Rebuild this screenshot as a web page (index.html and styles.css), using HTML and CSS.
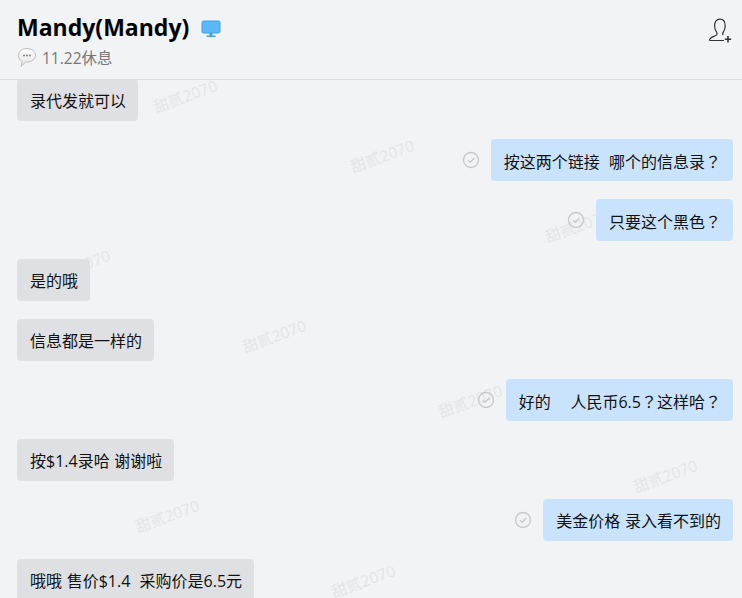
FILE: index.html
```html
<!DOCTYPE html>
<html lang="zh">
<head>
<meta charset="utf-8">
<title>Mandy</title>
<link rel="stylesheet" href="styles.css">
</head>
<body>
<div class="app">
  <header class="head">
    <div class="head-main">
      <div class="title-row">
        <h1 class="name">Mandy(Mandy)</h1>
        <svg class="pc" viewBox="0 0 20 18" width="20" height="18"><rect x="1" y="1" width="18" height="12" rx="1.5" fill="#5cb8f5" stroke="#36a3ee"/><rect x="8.5" y="13" width="3" height="3" fill="#36a3ee"/><rect x="5.5" y="15.5" width="9" height="1.5" fill="#36a3ee"/></svg>
      </div>
      <div class="status">
        <svg class="bubble-ico" viewBox="0 0 20 20" width="20" height="20"><defs><linearGradient id="glow" x1="0" y1="0" x2="0" y2="1"><stop offset="0" stop-color="#ffffff"/><stop offset="1" stop-color="#e4e4e4"/></linearGradient></defs><path d="M10 1.500c4.700 0 8.500 3 8.500 6.800s-3.800 6.700-8.500 6.700l-1.200-.1L4 19.500l1.200-4.800C3.100 13.500 1.500 10.800 1.500 8.300 1.500 4.500 5.300 1.500 10 1.500z" fill="url(#glow)" stroke="#bcbcbc"/><circle cx="7" cy="8.500" r=".9" fill="#777"/><circle cx="10" cy="8.500" r=".9" fill="#777"/><circle cx="13" cy="8.500" r=".9" fill="#777"/></svg>
        <span>11.22休息</span>
      </div>
    </div>
    <svg class="add-user" viewBox="0 0 24 26" width="24" height="26" fill="none" stroke="#333" stroke-width="1.2"><path d="M1.500 23.500c0-3 3-3.600 6.400-5 1.600-.7 1.300-2.600.4-3.800-1.100-1.500-1.700-3.300-1.700-6 0-4 2.100-6.500 5.300-6.500s5.300 2.500 5.300 6.500c0 2.700-.6 4.500-1.700 6-.9 1.200-1.100 2.400-.2 3.300M1.500 23.500H16"/><path d="M20 19v6.500M16.800 22.300h6.400" stroke-width="1.600"/></svg>
  </header>
  <main class="chat">
    <div class="marks" aria-hidden="true">
      <span class="mark m1">甜贰2070</span>
      <span class="mark m2">甜贰2070</span>
      <span class="mark m3">甜贰2070</span>
      <span class="mark m4">甜贰2070</span>
      <span class="mark m5">甜贰2070</span>
      <span class="mark m6">甜贰2070</span>
      <span class="mark m7">甜贰2070</span>
      <span class="mark m8">甜贰2070</span>
      <span class="mark m9">甜贰2070</span>
    </div>
    <div class="list">
      <div class="msg in first"><div class="text">录代发就可以</div></div>
      <div class="msg out"><svg class="tick" viewBox="0 0 18 18"><circle cx="9" cy="9" r="7.500"/><path d="M5.800 9.300l2.300 2 4.200-4.300"/></svg><div class="text">按这两个链接&nbsp; 哪个的信息录<span class="q">？</span></div></div>
      <div class="msg out"><svg class="tick" viewBox="0 0 18 18"><circle cx="9" cy="9" r="7.500"/><path d="M5.800 9.300l2.300 2 4.200-4.300"/></svg><div class="text">只要这个黑色<span class="q">？</span></div></div>
      <div class="msg in"><div class="text">是的哦</div></div>
      <div class="msg in"><div class="text">信息都是一样的</div></div>
      <div class="msg out"><svg class="tick" viewBox="0 0 18 18"><circle cx="9" cy="9" r="7.500"/><path d="M5.800 9.300l2.300 2 4.200-4.300"/></svg><div class="text tight">好的&nbsp; &nbsp; &nbsp;人民币6.5<span class="q">？</span>这样哈<span class="q">？</span></div></div>
      <div class="msg in"><div class="text">按$1.4录哈 谢谢啦</div></div>
      <div class="msg out"><svg class="tick" viewBox="0 0 18 18"><circle cx="9" cy="9" r="7.500"/><path d="M5.800 9.300l2.300 2 4.200-4.300"/></svg><div class="text">美金价格 录入看不到的</div></div>
      <div class="msg in"><div class="text">哦哦 售价$1.4&nbsp; 采购价是6.5元</div></div>
    </div>
  </main>
</div>
</body>
</html>
```
FILE: styles.css
```css
* { box-sizing: border-box; }
html, body { margin: 0; height: 100%; overflow: hidden; }
body {
  background: #f2f3f5;
  color: #111;
  font-family: "Open Sans", "Noto Sans CJK SC", sans-serif;
}
.app { display: flex; flex-direction: column; height: 598px; }
.head {
  height: 80px;
  flex: none;
  display: flex;
  justify-content: space-between;
  padding: 13px 10px 0 17px;
  border-bottom: 1px solid #dcdcdc;
}
.title-row { display: flex; align-items: center; gap: 12px; height: 28px; }
.name { margin: 0; font-size: 23px; font-weight: 700; line-height: 28px; color: #000; }
.pc { margin-top: 3px; }
.status { display: flex; align-items: center; gap: 5px; height: 20px; margin-top: 6px; color: #777; font-size: 15.5px; }
.add-user { margin-top: 4px; }
.chat { position: relative; flex: 1; overflow: hidden; }
.marks { position: absolute; inset: 0; }
.mark {
  position: absolute;
  font-size: 15.5px;
  line-height: 20px;
  color: #e3e5e9;
  transform: rotate(-20deg);
  white-space: nowrap;
}
.m1 { left: 152px; top: 6px; }
.m2 { left: 349px; top: 66px; }
.m3 { left: 544px; top: 136px; }
.m4 { left: 45px; top: 176px; }
.m5 { left: 241px; top: 246px; }
.m6 { left: 437px; top: 311px; }
.m7 { left: 632px; top: 386px; }
.m8 { left: 134px; top: 426px; }
.m9 { left: 330px; top: 491px; }
.list { position: relative; display: flex; flex-direction: column; gap: 18px; padding: 0 9px 0 17px; }
.msg { display: flex; align-items: center; }
.msg.first { margin-top: -1px; }
.msg.out { justify-content: flex-end; gap: 11px; }
.text {
  height: 42px;
  padding: 3px 12px 0 13px;
  border-radius: 4px;
  font-size: 16px;
  line-height: 39px;
  white-space: nowrap;
  word-spacing: .5px;
}
.tight { word-spacing: -.2px; }
.q {
  display: inline-block;
  width: 16px;
  font-family: "Noto Sans CJK TC", sans-serif;
}
.in .text { background: #dfe0e3; }
.out .text { background: #cae3fd; }
.tick { width: 18px; height: 18px; fill: none; stroke: #c8c8c8; stroke-width: 1.300; }
```
